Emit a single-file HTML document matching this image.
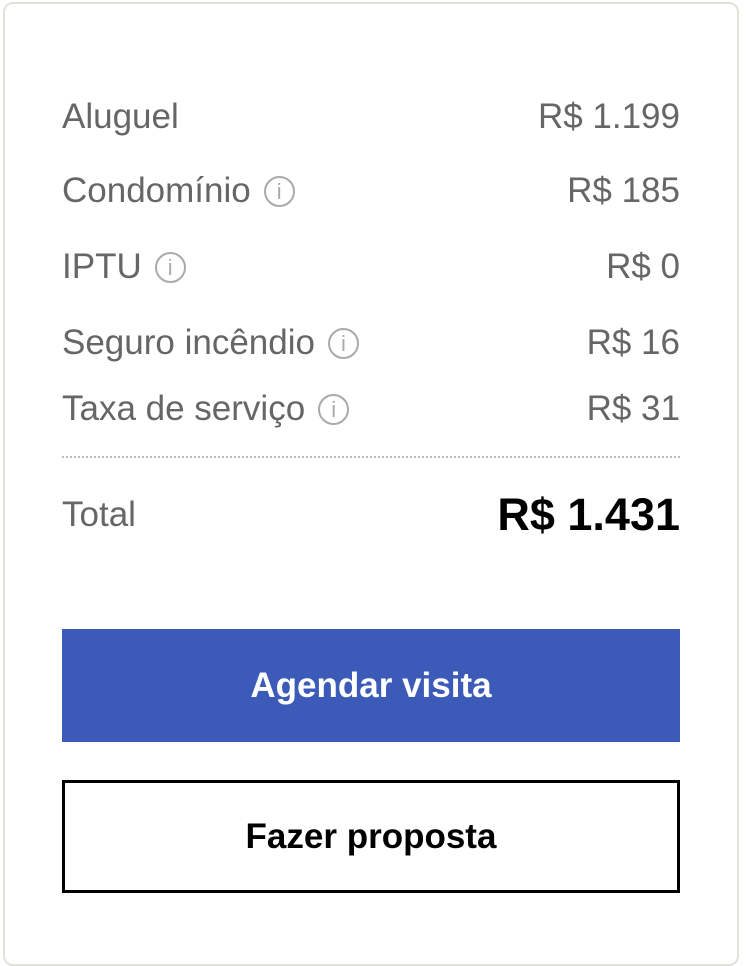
<!DOCTYPE html>
<html><head><style>
body{margin:0;width:746px;height:936px;background:#fff;font-family:"Liberation Sans",Arial,sans-serif;position:relative;overflow:hidden}
.card{position:absolute;left:3px;top:2px;width:732px;height:960px;border:2px solid #e2e2dc;border-radius:10px;background:#fff}
.row{position:absolute;left:62px;width:618px;display:flex;justify-content:space-between;align-items:center;color:#666;font-size:35px;height:40px}
.row span{display:flex;align-items:center}
.i{display:inline-block;width:31px;height:31px;border:2px solid #aaa;border-radius:50%;margin-left:13px;color:#aaa;font-size:22px;text-align:center;line-height:28px;box-sizing:border-box;font-style:normal}
.div{position:absolute;left:62px;width:618px;top:456px;border-top:2px dotted #bbb}
.btn{position:absolute;left:62px;width:618px;height:113px;display:flex;align-items:center;justify-content:center;font-weight:bold;font-size:35px;box-sizing:border-box}
</style></head><body>
<div class="card"></div>
<div class="row" style="top:97px"><span>Aluguel</span><span>R$ 1.199</span></div>
<div class="row" style="top:171px"><span>Condomínio<i class="i">i</i></span><span>R$ 185</span></div>
<div class="row" style="top:247px"><span>IPTU<i class="i">i</i></span><span>R$ 0</span></div>
<div class="row" style="top:323px"><span>Seguro incêndio<i class="i">i</i></span><span>R$ 16</span></div>
<div class="row" style="top:389px"><span>Taxa de serviço<i class="i">i</i></span><span>R$ 31</span></div>
<div class="div"></div>
<div class="row" style="top:495px"><span>Total</span><span style="color:#000;font-weight:bold;font-size:45px">R$ 1.431</span></div>
<div class="btn" style="top:629px;background:#3c5ab7;color:#fff">Agendar visita</div>
<div class="btn" style="top:780px;border:3px solid #000;color:#000;background:#fff">Fazer proposta</div>
</body></html>
